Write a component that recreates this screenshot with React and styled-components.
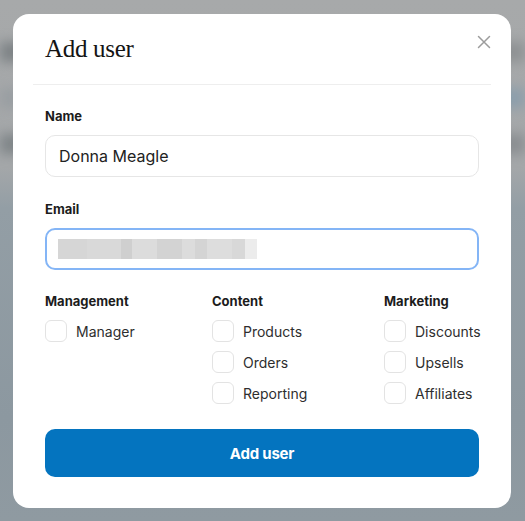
// 사용자 추가 모달
import React, { useState } from "react";
import styled, { createGlobalStyle } from "styled-components";

const GlobalStyle = createGlobalStyle`
  html, body {
    margin: 0;
    padding: 0;
  }
  body {
    font-family: Inter, "Noto Sans", sans-serif;
    color: #1f1f1f;
  }
  * {
    box-sizing: border-box;
  }
`;

// 모달 뒤 흐린 화면
const Page = styled.div`
  position: relative;
  width: 525px;
  height: 521px;
  overflow: hidden;
  background: linear-gradient(
    180deg,
    #a7a9aa 0%,
    #a4a7a9 32%,
    #939ea5 40%,
    #8c98a0 80%,
    #8f9aa1 100%
  );
`;

const Backdrop = styled.div`
  display: flex;
  flex-direction: column;
  gap: 26px;
  padding: 42px 0 0;
  filter: blur(6px);
`;

const BackdropRow = styled.div`
  display: flex;
  justify-content: space-between;
  height: 20px;
`;

const BackdropBar = styled.div`
  width: 44px;
  height: 20px;
  background: ${(props) => props.$color};
`;

const Modal = styled.div`
  position: absolute;
  left: 13px;
  top: 14px;
  width: 498px;
  height: 494px;
  background: #ffffff;
  border-radius: 16px;
  display: flex;
  flex-direction: column;
`;

const Header = styled.div`
  display: flex;
  justify-content: space-between;
  align-items: flex-start;
  margin: 0 20px;
  padding: 19px 0 19px 12px;
  border-bottom: 1px solid #eeeeee;
`;

const Title = styled.h2`
  margin: 0;
  font-family: "Liberation Serif", "DejaVu Serif", serif;
  font-weight: 400;
  font-size: 25px;
  line-height: 32px;
  letter-spacing: -0.3px;
  color: #141414;
`;

const CloseButton = styled.button`
  display: flex;
  border: none;
  background: none;
  padding: 0;
  margin-top: 2px;
  cursor: pointer;
`;

const Body = styled.form`
  display: flex;
  flex-direction: column;
  padding: 22px 32px 31px;
`;

const Field = styled.div`
  display: flex;
  flex-direction: column;
  gap: 10px;
  margin-bottom: 23px;
`;

const Label = styled.label`
  font-size: 13px;
  line-height: 18px;
  font-weight: 650;
  color: #1c1c1c;
`;

const TextInput = styled.input`
  width: 100%;
  height: 42px;
  border: 1.5px solid #e6e6e6;
  border-radius: 10px;
  padding: 0 13px;
  font-family: Inter, "Noto Sans", sans-serif;
  font-size: 16px;
  color: #222222;
  outline: none;
`;

// 가려진 이메일 칸
const MaskedInput = styled.div`
  display: flex;
  align-items: center;
  height: 42px;
  border: 2px solid #84b5f6;
  border-radius: 10px;
  padding: 0 11px;
`;

const MaskStrip = styled.div`
  display: flex;
  height: 20px;
`;

const MaskBlock = styled.div`
  height: 20px;
  width: ${(props) => props.$w}px;
  background: ${(props) => props.$c};
`;

const Groups = styled.div`
  display: grid;
  grid-template-columns: 167px 172px 1fr;
  margin-top: -1px;
`;

const Group = styled.div`
  display: flex;
  flex-direction: column;
  gap: 9px;
`;

const GroupTitle = styled.div`
  font-size: 13px;
  line-height: 18px;
  font-weight: 650;
  color: #1c1c1c;
  margin-bottom: 1px;
`;

const CheckRow = styled.label`
  display: flex;
  align-items: center;
  gap: 9px;
  height: 22px;
  font-size: 14px;
  color: #2e2e2e;
  cursor: pointer;
`;

const Box = styled.span`
  width: 22px;
  height: 22px;
  border: 1.5px solid #e3e3e3;
  border-radius: 6px;
  background: ${(props) => (props.$checked ? "#0474bf" : "#ffffff")};
  flex-shrink: 0;
`;

const SubmitButton = styled.button`
  margin-top: 25px;
  height: 48px;
  width: 100%;
  border: none;
  border-radius: 10px;
  background: #0474bf;
  color: #ffffff;
  font-family: Inter, "Noto Sans", sans-serif;
  font-size: 15px;
  font-weight: 700;
  letter-spacing: -0.2px;
  cursor: pointer;
`;

const maskBlocks = [
  [29, "#d6d6d6"],
  [34, "#d9d9d9"],
  [11, "#cfcfcf"],
  [25, "#dcdcdc"],
  [25, "#d3d3d3"],
  [13, "#dcdcdc"],
  [12, "#d4d4d4"],
  [25, "#dddddd"],
  [13, "#d8d8d8"],
  [12, "#ececec"],
];

const groups = [
  { title: "Management", items: ["Manager"] },
  { title: "Content", items: ["Products", "Orders", "Reporting"] },
  { title: "Marketing", items: ["Discounts", "Upsells", "Affiliates"] },
];

const backdropRows = [
  ["#7d8285", "#8e9193"],
  ["#999ea2", "#8c9eab"],
  ["#7f8588", "#8a8e91"],
];

const Checkbox = ({ label }) => {
  const [checked, setChecked] = useState(false);
  return (
    <CheckRow onClick={() => setChecked(!checked)}>
      <Box $checked={checked} />
      {label}
    </CheckRow>
  );
};

const App = () => {
  const [name, setName] = useState("Donna Meagle");

  return (
    <Page>
      <GlobalStyle />
      <Backdrop>
        {backdropRows.map((row, i) => (
          <BackdropRow key={i}>
            <BackdropBar $color={row[0]} />
            <BackdropBar $color={row[1]} />
          </BackdropRow>
        ))}
      </Backdrop>

      <Modal>
        <Header>
          <Title>Add user</Title>
          <CloseButton type="button" aria-label="Close">
            <svg width="14" height="14" viewBox="0 0 14 14">
              <path
                d="M1.5 1.5 L12.5 12.5 M12.5 1.5 L1.5 12.5"
                stroke="#9c9c9c"
                strokeWidth="1.5"
                strokeLinecap="round"
              />
            </svg>
          </CloseButton>
        </Header>

        <Body onSubmit={(e) => e.preventDefault()}>
          <Field>
            <Label>Name</Label>
            <TextInput value={name} onChange={(e) => setName(e.target.value)} />
          </Field>

          <Field>
            <Label>Email</Label>
            <MaskedInput>
              <MaskStrip>
                {maskBlocks.map(([w, c], i) => (
                  <MaskBlock key={i} $w={w} $c={c} />
                ))}
              </MaskStrip>
            </MaskedInput>
          </Field>

          <Groups>
            {groups.map((group) => (
              <Group key={group.title}>
                <GroupTitle>{group.title}</GroupTitle>
                {group.items.map((item) => (
                  <Checkbox key={item} label={item} />
                ))}
              </Group>
            ))}
          </Groups>

          <SubmitButton type="submit">Add user</SubmitButton>
        </Body>
      </Modal>
    </Page>
  );
};

export default App;
